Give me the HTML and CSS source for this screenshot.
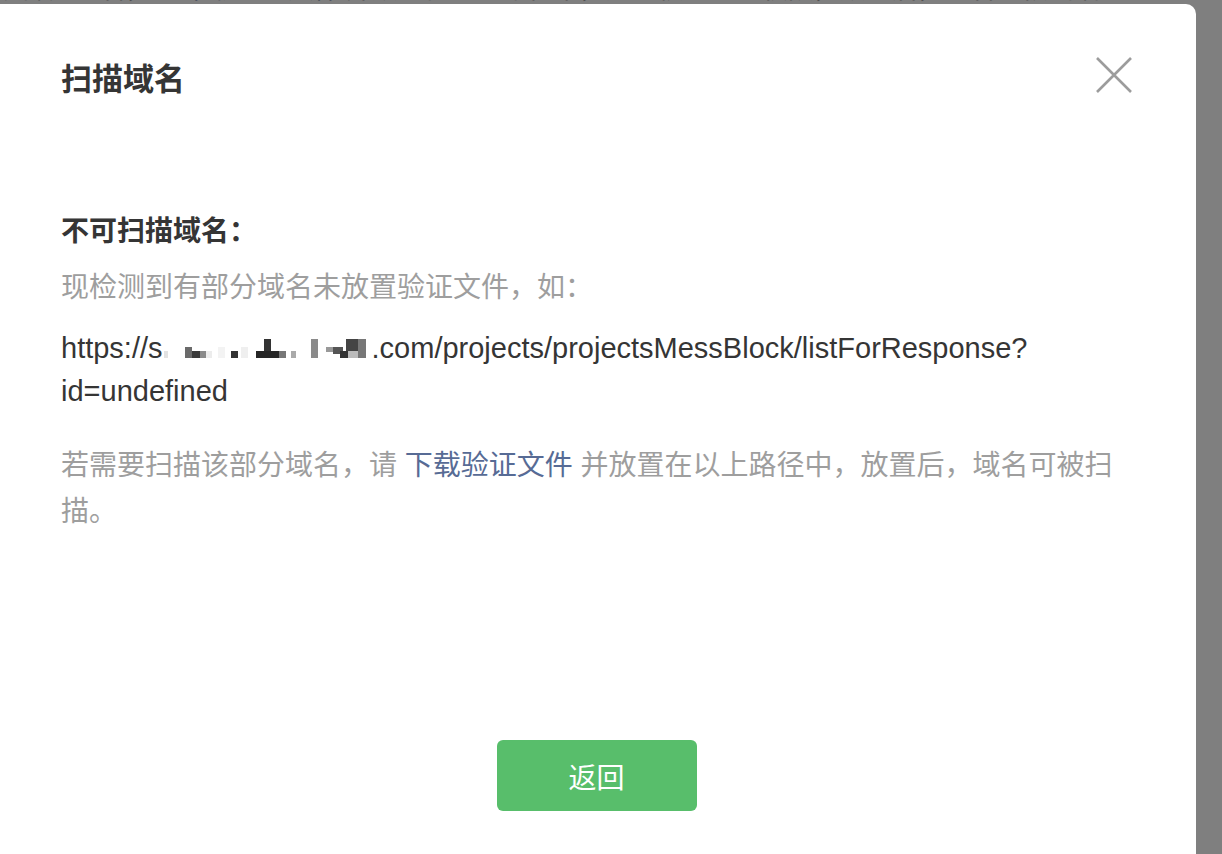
FILE: index.html
```html
<!DOCTYPE html>
<html lang="zh-CN">
<head>
<meta charset="utf-8">
<title>扫描域名</title>
<link rel="stylesheet" href="styles.css">
</head>
<body>
<div class="page">
  <p class="page-text">若需要扫描该部分域名，请 <a class="link" href="#">下载验证文件</a> 并放置在以上路径中，用于校验你的权限，放置后，域名可被扫描</p>
</div>
<div class="mask"></div>
<div class="dialog">
  <div class="dialog-header">
    <h1 class="dialog-title">扫描域名</h1>
    <button class="close" aria-label="关闭">
      <svg viewBox="0 0 36 36" width="36" height="36"><path d="M1 1 L35 35 M35 1 L1 35" stroke="#9c9c9c" stroke-width="2.6" fill="none"/></svg>
    </button>
  </div>
  <div class="dialog-body">
    <p class="section-label">不可扫描域名：</p>
    <p class="desc">现检测到有部分域名未放置验证文件，如：</p>
    <p class="url">https://s<svg class="blur" viewBox="0 0 208 24" width="208" height="24"><rect x="0" y="17" width="4" height="7" fill="#e2e2e2"/><rect x="21" y="13" width="7" height="11" fill="#6a6a6a"/><rect x="28" y="17" width="8" height="7" fill="#3a3a3a"/><rect x="36" y="17" width="6" height="7" fill="#8a8a8a"/><rect x="42" y="17" width="6" height="7" fill="#ececec"/><rect x="54" y="13" width="7" height="11" fill="#f3f3f3"/><rect x="67" y="17" width="7" height="7" fill="#333"/><rect x="77" y="13" width="7" height="11" fill="#efefef"/><rect x="100" y="5" width="7" height="12" fill="#333"/><rect x="92" y="17" width="23" height="7" fill="#262626"/><rect x="115" y="17" width="7" height="7" fill="#777"/><rect x="127" y="17" width="5" height="7" fill="#aaa"/><rect x="147" y="5" width="7" height="19" fill="#8a8a8a"/><rect x="162" y="13" width="7" height="5" fill="#999"/><rect x="169" y="13" width="10" height="7" fill="#555"/><rect x="182" y="5" width="12" height="12" fill="#444"/><rect x="176" y="17" width="8" height="7" fill="#333"/><rect x="184" y="17" width="10" height="7" fill="#bbb"/><rect x="194" y="5" width="8" height="19" fill="#777"/></svg>.com/projects/projectsMessBlock/listForResponse?<wbr>id=undefined</p>
    <p class="tip">若需要扫描该部分域名，请 <a class="link" href="#">下载验证文件</a> 并放置在以上路径中，放置后，域名可被扫描。</p>
  </div>
  <button class="btn-back">返回</button>
</div>
</body>
</html>
```

FILE: styles.css
```css
html, body {
  margin: 0;
  padding: 0;
  height: 100%;
  overflow: hidden;
  background: #fff;
  font-family: "Liberation Sans", "Noto Sans CJK SC", sans-serif;
}

.page {
  padding: 0;
}

.page-text {
  margin: -31px 0 0 -134px;
  white-space: nowrap;
  font-family: "Noto Sans CJK SC", sans-serif;
  font-size: 26px;
  line-height: 36px;
  color: #999;
}

.page-text .link {
  color: #576b95;
}

.mask {
  position: fixed;
  inset: 0;
  background: rgba(0, 0, 0, 0.5);
}

.dialog {
  position: fixed;
  top: 4px;
  left: -40px;
  right: 26px;
  bottom: -20px;
  background: #fff;
  border-radius: 10px;
  padding: 51px 64px 0 101px;
  display: flex;
  flex-direction: column;
}

.dialog-header {
  display: flex;
  justify-content: space-between;
  align-items: center;
  height: 44px;
}

.dialog-title {
  margin: 0;
  font-family: "Noto Sans CJK SC", sans-serif;
  font-size: 31px;
  font-weight: 600;
  line-height: 44px;
  color: #353535;
}

.close {
  width: 36px;
  height: 36px;
  margin-top: -4px;
  padding: 0;
  border: 0;
  background: none;
  display: flex;
}

.dialog-body {
  margin-top: 108px;
}

.section-label {
  margin: 0 0 12px;
  font-family: "Noto Sans CJK SC", sans-serif;
  font-size: 28px;
  font-weight: 700;
  line-height: 44px;
  color: #353535;
}

.desc {
  margin: 0;
  font-family: "Noto Sans CJK SC", sans-serif;
  font-size: 28px;
  line-height: 44px;
  color: #9e9e9e;
}

.url {
  margin: 20px 0 0;
  font-family: "Liberation Sans", sans-serif;
  font-size: 29px;
  line-height: 43px;
  color: #353535;
}

.blur {
  vertical-align: baseline;
  margin-left: 1px;
}

.tip {
  margin: 30px 0 0;
  font-size: 28px;
  line-height: 46px;
  color: #9e9e9e;
}

.tip .link,
.link {
  color: #576b95;
  text-decoration: none;
}

.btn-back {
  align-self: center;
  margin-top: 205px;
  width: 200px;
  height: 71px;
  border: 0;
  border-radius: 6px;
  background: #58be6b;
  color: #fff;
  font-family: "Noto Sans CJK SC", sans-serif;
  font-size: 28px;
  padding: 0;
}
```
